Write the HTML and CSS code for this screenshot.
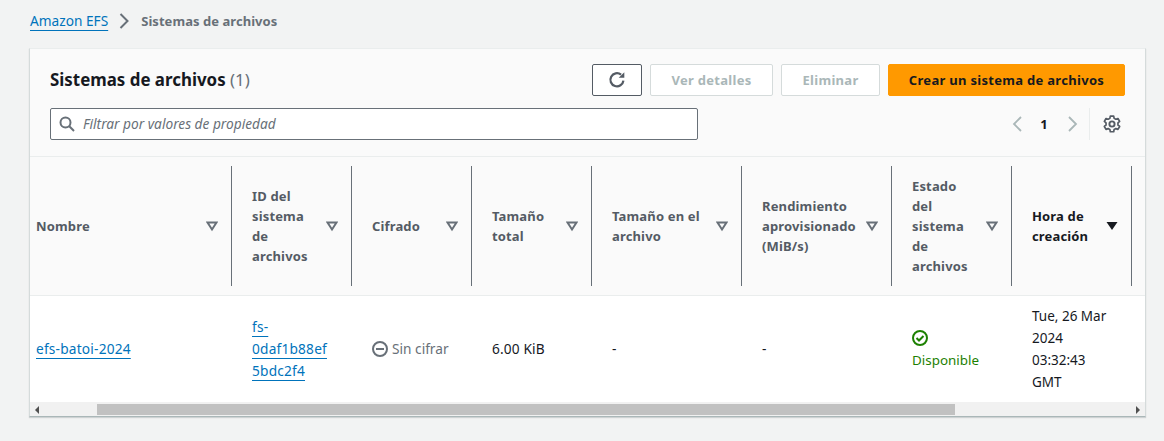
FILE: index.html
```html
<!DOCTYPE html>
<html lang="es">
<head>
<meta charset="utf-8">
<title>Sistemas de archivos</title>
<link rel="stylesheet" href="styles.css">
</head>
<body>
<nav class="crumbs">
  <a class="link" href="#">Amazon EFS</a>
  <svg class="crumb-sep" width="16" height="16" viewBox="0 0 16 16"><path d="M4.500 1 11.500 8l-7 7" fill="none" stroke="#687078" stroke-width="2"/></svg>
  <span class="crumb-here">Sistemas de archivos</span>
</nav>
<section class="card">
  <header class="card-head">
    <div class="head-top">
      <h1 class="title">Sistemas de archivos <span class="count">(1)</span></h1>
      <div class="actions">
        <button class="btn btn-icon" aria-label="Actualizar">
          <svg width="18" height="18" viewBox="0 0 16 16"><path d="M13.700 8.500A5.800 5.800 0 1 1 11.600 3.300" fill="none" stroke="#545b64" stroke-width="2"/><path d="M14.500 1v5h-5z" fill="#545b64"/></svg>
        </button>
        <button class="btn btn-off btn-ver">Ver detalles</button>
        <button class="btn btn-off btn-del">Eliminar</button>
        <button class="btn btn-main">Crear un sistema de archivos</button>
      </div>
    </div>
    <div class="head-bottom">
      <label class="filter">
        <svg width="16" height="16" viewBox="0 0 16 16"><circle cx="6.500" cy="6.500" r="5" fill="none" stroke="#687078" stroke-width="2"/><path d="m10.300 10.300 4.700 4.700" stroke="#687078" stroke-width="2"/></svg>
        <span class="filter-text">Filtrar por valores de propiedad</span>
      </label>
      <div class="pager">
        <svg width="16" height="16" viewBox="0 0 16 16"><path d="M11 1 4 8l7 7" fill="none" stroke="#aab7b8" stroke-width="1.800"/></svg>
        <span class="page-num">1</span>
        <svg width="16" height="16" viewBox="0 0 16 16"><path d="m5 1 7 7-7 7" fill="none" stroke="#aab7b8" stroke-width="1.800"/></svg>
        <span class="pager-line"></span>
        <svg width="18" height="18" viewBox="0 0 16 16" class="gear"><circle cx="8" cy="8" r="2.300" fill="none" stroke="#545b64" stroke-width="1.700"/><path d="M6.500 1h3l.4 2 1.500.8 1.900-.7 1.500 2.600-1.500 1.300v1.900l1.500 1.300-1.500 2.600-1.900-.7-1.500.8-.4 2h-3l-.4-2-1.500-.8-1.900.7L1.200 10.200l1.500-1.300V7L1.200 5.700l1.500-2.600 1.900.7 1.500-.8z" fill="none" stroke="#545b64" stroke-width="1.500" stroke-linejoin="round"/></svg>
      </div>
    </div>
  </header>
  <div class="table">
    <div class="th th-first"><span class="th-text">Nombre</span><svg class="sort" width="12" height="12" viewBox="0 0 12 12"><path d="M1.500 2.500h9L6 9.500z" fill="none" stroke="#687078" stroke-width="2"/></svg></div>
    <div class="th"><span class="th-text">ID del<br>sistema<br>de<br>archivos</span><svg class="sort" width="12" height="12" viewBox="0 0 12 12"><path d="M1.500 2.500h9L6 9.500z" fill="none" stroke="#687078" stroke-width="2"/></svg></div>
    <div class="th"><span class="th-text">Cifrado</span><svg class="sort" width="12" height="12" viewBox="0 0 12 12"><path d="M1.500 2.500h9L6 9.500z" fill="none" stroke="#687078" stroke-width="2"/></svg></div>
    <div class="th"><span class="th-text">Tamaño<br>total</span><svg class="sort" width="12" height="12" viewBox="0 0 12 12"><path d="M1.500 2.500h9L6 9.500z" fill="none" stroke="#687078" stroke-width="2"/></svg></div>
    <div class="th"><span class="th-text">Tamaño en el<br>archivo</span><svg class="sort" width="12" height="12" viewBox="0 0 12 12"><path d="M1.500 2.500h9L6 9.500z" fill="none" stroke="#687078" stroke-width="2"/></svg></div>
    <div class="th"><span class="th-text">Rendimiento<br>aprovisionado<br>(MiB/s)</span><svg class="sort" width="12" height="12" viewBox="0 0 12 12"><path d="M1.500 2.500h9L6 9.500z" fill="none" stroke="#687078" stroke-width="2"/></svg></div>
    <div class="th"><span class="th-text">Estado<br>del<br>sistema<br>de<br>archivos</span><svg class="sort" width="12" height="12" viewBox="0 0 12 12"><path d="M1.500 2.500h9L6 9.500z" fill="none" stroke="#687078" stroke-width="2"/></svg></div>
    <div class="th th-active"><span class="th-text">Hora de<br>creación</span><svg class="sort" width="12" height="12" viewBox="0 0 12 12"><path d="M.500 2h11L6 10z" fill="#16191f"/></svg></div>

    <div class="td td-first"><a class="link link-wide" href="#">efs-batoi-2024</a></div>
    <div class="td"><a class="link link-wide" href="#">fs-<br>0daf1b88ef<br>5bdc2f4</a></div>
    <div class="td td-muted"><svg width="16" height="16" viewBox="0 0 16 16"><circle cx="8" cy="8" r="7" fill="none" stroke="#687078" stroke-width="2"/><path d="M4 8h8" stroke="#687078" stroke-width="2"/></svg><span class="no-cipher">Sin cifrar</span></div>
    <div class="td td-size">6.00 KiB</div>
    <div class="td">-</div>
    <div class="td">-</div>
    <div class="td td-ok"><svg width="16" height="16" viewBox="0 0 16 16"><circle cx="8" cy="8" r="7" fill="none" stroke="#1d8102" stroke-width="2"/><path d="m4.500 8 2.500 2.500 4.500-4.500" fill="none" stroke="#1d8102" stroke-width="2"/></svg><span>Disponible</span></div>
    <div class="td td-date">Tue, 26 Mar<br>2024<br>03:32:43<br>GMT</div>
  </div>
  <div class="scrollbar">
    <span class="arrow arrow-left"></span>
    <span class="track"><span class="thumb"></span></span>
    <span class="arrow arrow-right"></span>
  </div>
</section>
</body>
</html>
```
FILE: styles.css
```css
* { box-sizing: border-box; }
html, body { height: 100%; }
body {
  margin: 0;
  background: #f2f3f3;
  color: #16191f;
  font-family: "Noto Sans", "Liberation Sans", sans-serif;
  font-size: 13.7px;
  line-height: 22px;
  overflow: hidden;
}
.link {
  color: #0073bb;
  text-decoration: underline;
  text-decoration-thickness: 1px;
  text-underline-offset: 4px;
  text-decoration-skip-ink: none;
}
.link-wide { letter-spacing: .2px; }
.crumbs {
  display: flex;
  align-items: center;
  height: 48px;
  padding: 0 0 6px 30px;
}
.crumb-sep { margin: 0 9px 0 8px; }
.crumb-here { color: #687078; font-size: 13px; font-weight: 700; letter-spacing: .05px; }
.card {
  width: 1117px;
  margin-left: 29px;
  height: 369px;
  background: #fff;
  border: 1px solid #eaeded;
  border-left-color: #d5dbdb;
  border-right-color: #d5dbdb;
  border-bottom: 1px solid #aab7b8;
  box-shadow: 0 1px 1px rgba(0, 28, 36, .15);
  overflow: hidden;
}
.card-head {
  height: 108px;
  padding: 15px 20px 0 20px;
  background: #fafafa;
  border-bottom: 1px solid #eaeded;
}
.head-top { display: flex; align-items: center; justify-content: space-between; height: 32px; }
.title { margin: 0; font-size: 16.900px; font-weight: 700; line-height: 32px; }
.count { color: #687078; font-weight: 400; }
.actions { display: flex; gap: 8px; }
.btn {
  height: 32px;
  padding: 0;
  border-radius: 2px;
  background: #fff;
  font: 700 13px/20px "Noto Sans", "Liberation Sans", sans-serif;
  letter-spacing: .3px;
}
.btn-icon { width: 50px; border: 1px solid #545b64; display: flex; align-items: center; justify-content: center; }
.btn-off { border: 1px solid #d5dbdb; color: #aab7b8; }
.btn-ver { width: 123px; }
.btn-del { width: 99px; }
.btn-main { width: 237px; border: 1px solid #f90; background: #f90; color: #16191f; }
.head-bottom { display: flex; align-items: center; justify-content: space-between; margin-top: 12px; }
.filter {
  display: flex;
  align-items: center;
  gap: 8px;
  width: 648px;
  height: 32px;
  padding-left: 8px;
  background: #fff;
  border: 1px solid #687078;
  border-radius: 2px;
}
.filter-text { color: #687078; font-style: italic; }
.pager { display: flex; align-items: center; height: 32px; margin-right: 4px; }
.page-num { width: 40px; margin-left: -2px; text-align: center; font-size: 13px; font-weight: 700; }
.pager svg { flex: none; }
.pager-line { width: 1px; height: 32px; margin: 0 13px 0 9px; background: #eaeded; }
.table {
  display: grid;
  grid-template-columns: 202px 120px 120px 120px 150px 150px 120px 120px 13px;
  grid-template-rows: 139px 106px;
  height: 245px;
}
.th {
  position: relative;
  display: flex;
  align-items: center;
  justify-content: space-between;
  padding: 0 14px 0 20px;
  background: #fafafa;
  color: #545b64;
  font-size: 13px;
  font-weight: 700;
  letter-spacing: .15px;
  line-height: 20px;
  border-bottom: 1px solid #eaeded;
}
.th::after {
  content: "";
  position: absolute;
  right: 0;
  top: 9px;
  bottom: 9px;
  width: 1px;
  background: #687078;
}
.th-first { padding-left: 6px; }
.th-active { color: #16191f; }
.sort { flex: none; }
.td {
  display: flex;
  align-items: center;
  padding: 0 4px 0 20px;
  color: #16191f;
  line-height: 22px;
}
.td a { display: block; }
.td-first { padding-left: 6px; }
.td-muted { color: #687078; }
.td-size { letter-spacing: .15px; }
.td-date { font-size: 13.500px; }
.no-cipher { margin-left: 4px; }
.td-ok { flex-direction: column; align-items: flex-start; justify-content: center; color: #1d8102; font-size: 13.400px; }
.td-ok svg { margin: 3px 0; }
.table::after {
  content: "";
  grid-column: 9;
  grid-row: 1;
  background: #fafafa;
  border-bottom: 1px solid #eaeded;
}
.scrollbar {
  display: flex;
  align-items: center;
  height: 15px;
  background: #f1f1f1;
}
.arrow { flex: none; width: 12px; height: 15px; position: relative; }
.arrow::after {
  content: "";
  position: absolute;
  top: 4px;
  border-top: 4px solid transparent;
  border-bottom: 4px solid transparent;
}
.arrow-left::after { left: 5px; border-right: 4px solid #505050; }
.arrow-right::after { right: 5px; border-left: 4px solid #505050; }
.track { flex: 1; height: 11px; padding-left: 55px; }
.thumb { display: block; width: 858px; height: 11px; background: #c1c1c1; }
```
